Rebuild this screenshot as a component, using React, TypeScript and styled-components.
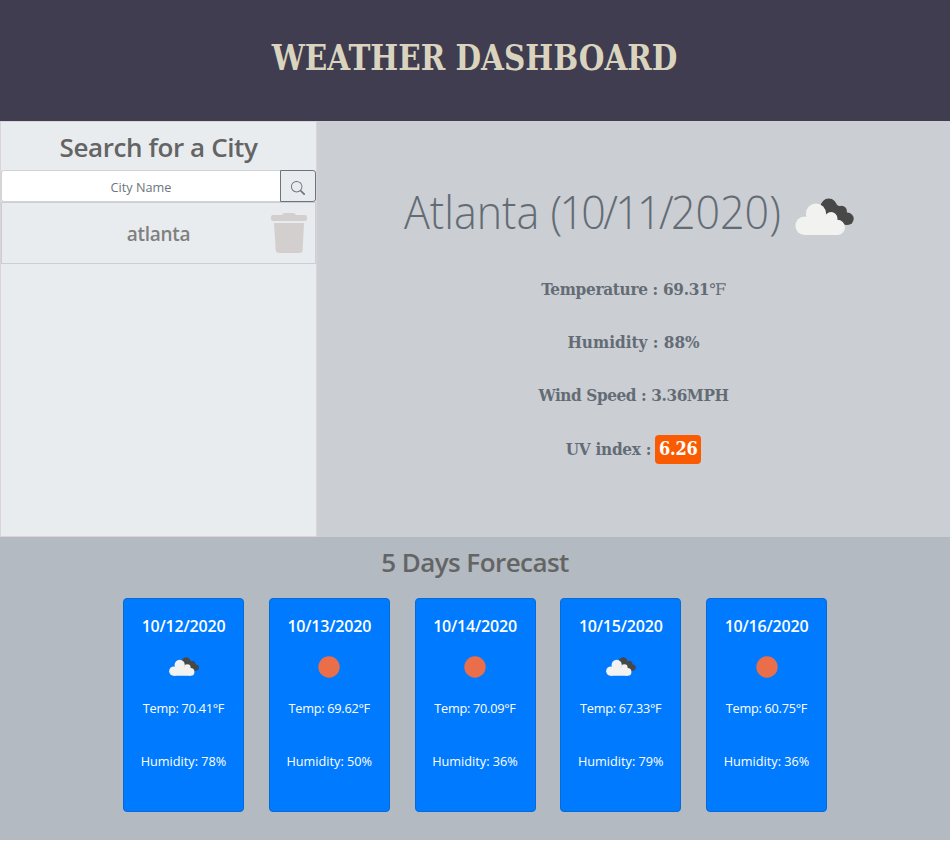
import React from "react";
import styled, { createGlobalStyle } from "styled-components";

const sans = '"Open Sans", "Noto Sans", sans-serif';
const serif = '"DejaVu Serif Condensed", "DejaVu Serif", serif';

const GlobalStyle = createGlobalStyle`
  *, *::before, *::after { box-sizing: border-box; }
  body { margin: 0; background: #fff; font-family: ${sans}; }
  h1, h2, h3, h4, p { margin: 0; }
`;

const Page = styled.div`
  width: 950px;
  text-align: center;
  white-space: nowrap;
`;

const Header = styled.header`
  height: 121px;
  display: flex;
  align-items: center;
  justify-content: center;
  padding-bottom: 6px;
  background: #3f3d4f;
`;

const Title = styled.h1`
  font: 700 35px/42px ${serif};
  color: #dad4bf;
  transform: scaleX(0.937);
`;

const Main = styled.main`
  display: flex;
  height: 416px;
`;

const Sidebar = styled.aside`
  width: 317px;
  border: 1px solid #dbd3d7;
  background: #e8ecef;
`;

const SidebarTitle = styled.h2`
  height: 48px;
  padding-top: 8px;
  font: 600 26px/34px ${sans};
  letter-spacing: -0.4px;
  color: #646464;
`;

const SearchForm = styled.div`
  display: flex;
  height: 32px;
`;

const CityInput = styled.input`
  flex: 1;
  min-width: 0;
  border: 1px solid #ced4da;
  border-right: 0;
  border-radius: 3px 0 0 3px;
  padding: 2px 0 0;
  background: #fff;
  font: 400 12.7px ${sans};
  text-align: center;
  outline: 0;
  &::placeholder { color: #6c757d; opacity: 1; }
`;

const SearchButton = styled.button`
  width: 36px;
  display: flex;
  align-items: center;
  justify-content: center;
  padding: 4px 0 0;
  border: 1px solid #6c757d;
  border-radius: 0 3px 3px 0;
  background: transparent;
  color: #6c757d;
`;

const HistoryRow = styled.div`
  display: grid;
  grid-template-columns: 1fr 36px;
  align-items: center;
  height: 62px;
  padding: 0 8px 0 44px;
  border: 1px solid #cbced3;
`;

const HistoryCity = styled.span`
  padding-top: 2px;
  font: 600 19px/28px ${sans};
  letter-spacing: -0.3px;
  color: #808080;
`;

const Current = styled.section`
  flex: 1;
  padding-top: 54px;
  background: #cbced3;
  color: #636c75;
`;

const CurrentTitle = styled.h2`
  display: flex;
  align-items: center;
  justify-content: center;
  height: 72px;
  padding-right: 9px;
  font: 300 46.5px/70px ${sans};
`;

const CurrentName = styled.span`
  transform: scaleX(0.925);
  transform-origin: left;
  margin-right: -31px;
`;

const Tight = styled.span`
  letter-spacing: -2.9px;
`;

const CurrentIcon = styled.span`
  display: flex;
  margin: 12px 0 0 15px;
`;

const Metrics = styled.div`
  display: grid;
  grid-auto-rows: 53.3px;
  align-items: center;
  padding-top: 15px;
  font: 700 17px/26px ${serif};
`;

const Metric = styled.p<{ $spacing: number }>`
  letter-spacing: ${(p) => p.$spacing}px;
`;

const Unit = styled.span`
  font: 400 16px "Liberation Serif", "DejaVu Serif", serif;
`;

const UvBadge = styled.span`
  display: inline-block;
  width: 46px;
  height: 29px;
  margin: 1px 0 -1px -1px;
  border-radius: 4px;
  background: #fb5b00;
  color: #fff;
  font-size: 18px;
  line-height: 28px;
`;

const Forecast = styled.section`
  height: 303px;
  background: #b3bac1;
`;

const ForecastTitle = styled.h2`
  height: 61px;
  padding-top: 8px;
  font: 600 26px/34px ${sans};
  letter-spacing: -0.55px;
  color: #646464;
`;

const Cards = styled.div`
  display: grid;
  grid-template-columns: repeat(5, 121px);
  justify-content: center;
  gap: 24.75px;
`;

const Card = styled.article`
  height: 214px;
  border: 1px solid #066bd5;
  border-radius: 4px;
  background: #007bff;
  color: #fff;
  font-size: 12.7px;
`;

const CardDate = styled.h3`
  height: 40px;
  padding-top: 15px;
  font: 600 16px/24px ${sans};
  letter-spacing: -0.2px;
`;

const CardIcon = styled.div`
  display: flex;
  align-items: center;
  justify-content: center;
  height: 55px;
`;

const CardText = styled.p<{ $spacing?: number }>`
  height: 53px;
  line-height: 28px;
  letter-spacing: ${(p) => p.$spacing ?? 0}px;
`;

const Clouds = ({ width }: { width: number }) => (
  <svg width={width} height={(width * 38) / 59} viewBox="-0.5 -0.5 59 38">
    <g fill="#484848">
      <circle cx="33.3" cy="8.2" r="8.2" />
      <circle cx="46" cy="12.6" r="5.4" />
      <circle cx="52" cy="20.3" r="6.2" />
      <path d="M36 4 47 9l7 8-3 9.4-6-1.4-14-9z" />
    </g>
    <g fill="#f2f2f0">
      <circle cx="9" cy="27.3" r="9.2" />
      <circle cx="20.5" cy="15.2" r="10.1" />
      <circle cx="35.6" cy="20" r="6.4" />
      <circle cx="41.9" cy="28.9" r="7.6" />
      <path d="M9 20h28l5 4v12.5H9z" />
    </g>
  </svg>
);

const Sun = () => (
  <svg width="22" height="22" viewBox="0 0 22 22">
    <circle cx="11" cy="11" r="10.7" fill="#eb6e4b" />
  </svg>
);

const SearchIcon = () => (
  <svg width="14" height="14" viewBox="0 0 16 16" fill="currentColor">
    <path d="M11.742 10.344a6.5 6.5 0 1 0-1.397 1.398h-.001q.044.06.098.115l3.85 3.85a1 1 0 0 0 1.415-1.414l-3.85-3.85a1 1 0 0 0-.115-.1zM12 6.5a5.5 5.5 0 1 1-11 0 5.5 5.5 0 0 1 11 0" />
  </svg>
);

const TrashIcon = () => (
  <svg width="36" height="41" viewBox="0 0 36 41" fill="#d3cfce">
    <path d="M2 2h9q1-2 3-2h8q2 0 3 2h9q2 0 2 2v2q0 2-2 2H2Q0 8 0 6V4q0-2 2-2z" />
    <path d="M3 10h30l-1.4 27q-.2 3-3.2 3H8q-3 0-3.3-3z" />
  </svg>
);

const days = [
  { date: "10/12/2020", cloudy: true, temp: "70.41", humidity: 78 },
  { date: "10/13/2020", cloudy: false, temp: "69.62", humidity: 50 },
  { date: "10/14/2020", cloudy: false, temp: "70.09", humidity: 36 },
  { date: "10/15/2020", cloudy: true, temp: "67.33", humidity: 79 },
  { date: "10/16/2020", cloudy: false, temp: "60.75", humidity: 36 },
];

export default function App() {
  return (
    <>
      <GlobalStyle />
      <Page>
        <Header>
          <Title>WEATHER DASHBOARD</Title>
        </Header>
        <Main>
          <Sidebar>
            <SidebarTitle>Search for a City</SidebarTitle>
            <SearchForm>
              <CityInput placeholder="City Name" />
              <SearchButton aria-label="Search"><SearchIcon /></SearchButton>
            </SearchForm>
            <HistoryRow>
              <HistoryCity>atlanta</HistoryCity>
              <TrashIcon />
            </HistoryRow>
          </Sidebar>
          <Current>
            <CurrentTitle>
              <CurrentName>Atlanta <Tight>(10/11/</Tight>2020)</CurrentName>
              <CurrentIcon><Clouds width={59} /></CurrentIcon>
            </CurrentTitle>
            <Metrics>
              <Metric $spacing={-0.3}>Temperature : 69.31<Unit>℉</Unit></Metric>
              <Metric $spacing={0}>Humidity : 88%</Metric>
              <Metric $spacing={-0.4}>Wind Speed : 3.36MPH</Metric>
              <Metric $spacing={-0.25}>UV index : <UvBadge>6.26</UvBadge></Metric>
            </Metrics>
          </Current>
        </Main>
        <Forecast>
          <ForecastTitle>5 Days Forecast</ForecastTitle>
          <Cards>
            {days.map((day) => (
              <Card key={day.date}>
                <CardDate>{day.date}</CardDate>
                <CardIcon>{day.cloudy ? <Clouds width={30} /> : <Sun />}</CardIcon>
                <CardText $spacing={-0.25}>Temp: {day.temp}°F</CardText>
                <CardText>Humidity: {day.humidity}%</CardText>
              </Card>
            ))}
          </Cards>
        </Forecast>
      </Page>
    </>
  );
}
